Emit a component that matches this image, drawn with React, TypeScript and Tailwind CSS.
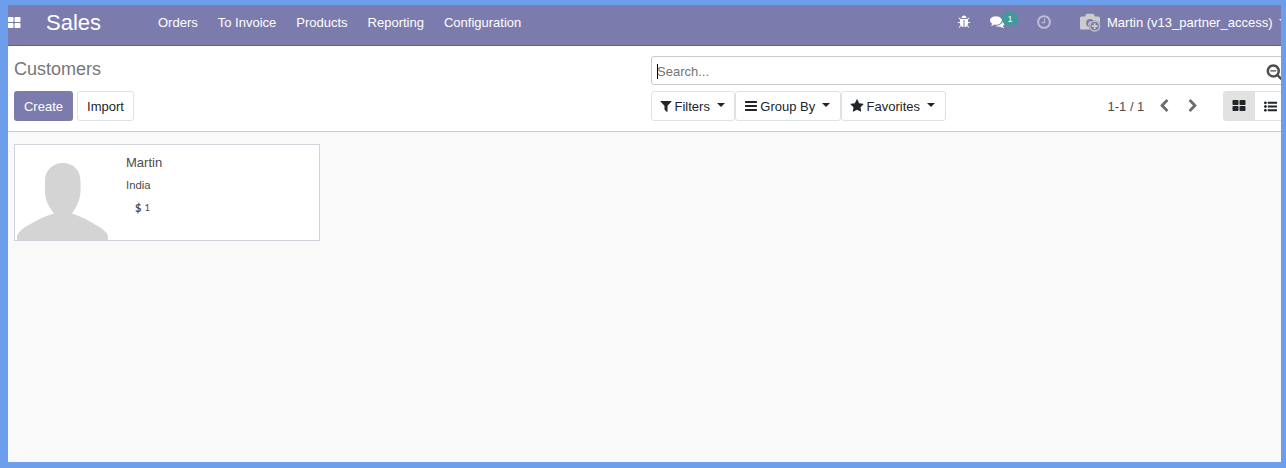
import React from "react";

const block = "h-512q-52 0-90-38t-38-90v-384q0-52 38-90t90-38h512q52 0 90 38t38 90z";
const bar = "v128q0 26-19 45t-45 19h-1408q-26 0-45-19t-19-45v-128q0-26 19-45t45-19h1408q26 0 45 19t19 45z";
const dot = "q0 80-56 136t-136 56-136-56-56-136 56-136 136-56 136 56 56 136z";
const line = "v192q0 13-9.5 22.5t-22.5 9.5h-1216q-13 0-22.5-9.5t-9.5-22.5v-192q0-13 9.5-22.5t22.5-9.5h1216q13 0 22.5 9.5t9.5 22.5z";

const icons = {
  grid: `M832 1024v384q0 52-38 90t-90 38${block}M832 256v384q0 52-38 90t-90 38${block}M1728 1024v384q0 52-38 90t-90 38${block}M1728 256v384q0 52-38 90t-90 38${block}`,
  bars: `M1664 1344${bar}M1664 832${bar}M1664 320${bar}`,
  list: `M384 1408${dot}M384 896${dot}M384 384${dot}M1792 1312${line}M1792 800${line}M1792 288${line}`,
  searchMinus:
    "M1088 800v64q0 13-9.5 22.5t-22.5 9.5h-576q-13 0-22.5-9.5t-9.5-22.5v-64q0-13 9.5-22.5t22.5-9.5h576q13 0 22.5 9.5t9.5 22.5zm128 32q0-185-131.5-316.5t-316.5-131.5-316.5 131.5-131.5 316.5 131.5 316.5 316.5 131.5 316.5-131.5 131.5-316.5zm512 832q0 53-37.5 90.5t-90.5 37.5q-54 0-90-38l-343-342q-179 124-399 124-143 0-273.5-55.5t-225-150-150-225-55.5-273.5 55.5-273.5 150-225 225-150 273.5-55.5 273.5 55.5 225 150 150 225 55.5 273.5q0 220-124 399l343 343q37 37 37 90z",
  filter:
    "M1595 295q17 41-14 70l-493 493v742q0 42-39 59-13 5-25 5-27 0-45-19l-256-256q-19-19-19-45v-486l-493-493q-31-29-14-70 17-39 59-39h1280q42 0 59 39z",
  star: "M1728 647q0 22-26 48l-363 354 86 500q1 7 1 20 0 21-10.5 35.5t-30.5 14.5q-19 0-40-12l-449-236-449 236q-22 12-40 12-21 0-31.5-14.5t-10.5-35.5q0-6 2-20l86-500-364-354q-25-27-25-48 0-37 56-46l502-73 225-455q19-41 49-41t49 41l225 455 502 73q56 9 56 46z",
  clock:
    "M1024 544v448q0 14-9 23t-23 9h-320q-14 0-23-9t-9-23v-64q0-14 9-23t23-9h224v-352q0-14 9-23t23-9h64q14 0 23 9t9 23zm416 352q0-148-73-273t-198-198-273-73-273 73-198 198-73 273 73 273 198 198 273 73 273-73 198-198 73-273zm224 0q0 209-103 385.5t-279.5 279.5-385.5 103-385.5-103-279.5-279.5-103-385.5 103-385.5 279.5-279.5 385.5-103 385.5 103 279.5 279.5 103 385.5z",
  comments:
    "M1408 768q0 139-94 257t-256.5 186.5-353.5 68.5q-86 0-176-16-124 88-278 128-36 9-86 16h-3q-11 0-20.5-8t-11.5-21q-1-3-1-6.5t.5-6.5 2-6l2.5-5 3.5-5.5 4-5 4.5-5 4-4.5q5-6 23-25t26-29.5 22.5-29 25-38.5 20.5-44q-124-72-195-177t-71-224q0-139 94-257t256.5-186.5 353.5-68.5 353.5 68.5 256.5 186.5 94 257zm384 256q0 120-71 224.5t-195 176.5q10 24 20.5 44t25 38.5 22.5 29 26 29.5 23 25q1 1 4 4.5t4.5 5 4 5 3.5 5.5l2.5 5 2 6 .5 6.5-1 6.5q-3 14-13 22t-22 7q-50-7-86-16-154-40-278-128-90 16-176 16-271 0-472-132 58 4 88 4 161 0 309-45t264-129q125-92 192-212t67-254q0-77-23-152 129 71 204 178t75 230z",
  bug: "M1696 960q0 26-19 45t-45 19h-224q0 171-67 290l208 209q19 19 19 45t-19 45q-18 19-45 19t-45-19l-198-197q-5 5-15 13t-42 28.5-65 36.5-82 29-97 13v-896h-128v896q-51 0-101.5-13.5t-87-33-66-39-43.5-32.5l-15-14-183 207q-20 21-48 21-24 0-43-16-19-18-20.5-44.5t15.5-46.5l202-227q-58-114-58-274h-224q-26 0-45-19t-19-45 19-45 45-19h224v-294l-173-173q-19-19-19-45t19-45 45-19 45 19l173 173h844l173-173q19-19 45-19t45 19 19 45-19 45l-173 173v294h224q26 0 45 19t19 45zm-480-576h-640q0-133 93.5-226.5t226.5-93.5 226.5 93.5 93.5 226.5z",
  left: "M1427 301l-531 531 531 531q19 19 19 45t-19 45l-166 166q-19 19-45 19t-45-19l-742-742q-19-19-19-45t19-45l742-742q19-19 45-19t45 19l166 166q19 19 19 45t-19 45z",
  right:
    "M1363 877l-742 742q-19 19-45 19t-45-19l-166-166q-19-19-19-45t19-45l531-531-531-531q-19-19-19-45t19-45l166-166q19-19 45-19t45 19l742 742q19 19 19 45t-19 45z",
};

function Icon({ name, className }: { name: keyof typeof icons; className: string }) {
  return (
    <svg viewBox="0 0 1792 1792" fill="currentColor" className={`block shrink-0 ${className}`}>
      <path d={icons[name]} />
    </svg>
  );
}

function Caret({ className = "" }: { className?: string }) {
  return (
    <svg viewBox="0 0 8 4" fill="currentColor" className={`block h-1 w-2 shrink-0 ${className}`}>
      <path d="M0 0h8L4 4z" />
    </svg>
  );
}

function CameraAvatar() {
  return (
    <svg viewBox="0 0 22 20" className="ml-[27px] block h-5 w-[22px] shrink-0">
      <path
        fill="#cccccc"
        d="M2.500 3.500h3.600l1-2.200Q7.500.7 8.500.7h5q1 0 1.400.6l1 2.200h3.300q1.800 0 1.800 1.800V16.500H2.500Q1 16.500 1 15V5Q1 3.500 2.500 3.500z"
      />
      <circle cx="11" cy="10" r="3.900" fill="#7c7bad" />
      <circle cx="12.200" cy="11.200" r="3" fill="#cccccc" />
      <circle cx="15.700" cy="13.200" r="5.800" fill="#7c7bad" />
      <circle cx="15.700" cy="13.200" r="4.900" fill="none" stroke="#cccccc" strokeWidth="1.100" />
      <path d="M15.700 10.200v6M12.700 13.200h6" stroke="#cccccc" strokeWidth="1.800" />
    </svg>
  );
}

function Navbar() {
  return (
    <header className="flex h-[41px] shrink-0 items-start border-b border-[#5f5e97] bg-[#7c7bad] text-white">
      <Icon name="grid" className="-ml-px mt-[11px] h-[14px] w-[14px]" />
      <div className="ml-[25px] w-[55px] text-[22px] leading-[35px]">Sales</div>
      <nav className="ml-[57px] flex gap-5 leading-[35px]">
        {["Orders", "To Invoice", "Products", "Reporting", "Configuration"].map((item) => (
          <a key={item}>{item}</a>
        ))}
      </nav>
      <div className="ml-auto flex h-[35px] w-[324px] shrink-0 items-center">
        <Icon name="bug" className="-mt-px h-[14px] w-[14px]" />
        <div className="relative ml-[19px]">
          <Icon name="comments" className="-mt-[2px] h-[15px] w-[15px]" />
          <span className="absolute -top-[4px] left-[12px] flex h-[14px] w-4 items-center justify-center rounded-full bg-[#3f9b9b] text-[9px] leading-none">
            1
          </span>
        </div>
        <Icon name="clock" className="-mt-[2px] ml-[31px] h-4 w-4 text-[#bdbcd8]" />
        <CameraAvatar />
        <span className="ml-[6px]">Martin (v13_partner_access)</span>
        <Caret className="-mt-[3px] ml-[7px]" />
      </div>
    </header>
  );
}

const dropdowns: { label: string; icon: keyof typeof icons; box: string; gap: string }[] = [
  { label: "Filters", icon: "filter", box: "w-[84px] pl-[7px]", gap: "ml-[1.5px]" },
  { label: "Group By", icon: "bars", box: "w-[106px] pl-2", gap: "ml-[2.3px]" },
  { label: "Favorites", icon: "star", box: "w-[105px] pl-2", gap: "ml-[2.6px]" },
];

function ControlPanel() {
  return (
    <section className="flex h-[86px] shrink-0 border-b border-[#c8c9cb] bg-white pl-[6px]">
      <div className="w-[637px] shrink-0 pt-[10px]">
        <h1 className="h-[35px] text-[18px] leading-[26px] text-[#777777]">Customers</h1>
        <div className="flex gap-1">
          <button className="h-[30px] w-[59px] rounded-[3px] bg-[#7c7bad] pt-[2px] text-white">Create</button>
          <button className="h-[30px] w-[57px] rounded-[3px] border border-[#dee2e6] pt-[2px] text-[#212529]">
            Import
          </button>
        </div>
      </div>
      <div className="w-[645px] shrink-0 pt-[10px]">
        <div className="flex h-[29px] items-center rounded-[3px] border border-[#c8c9cb] pl-[5px]">
          <span className="mt-[2px] h-[15px] w-px bg-black" />
          <span className="-ml-px flex-1 pt-[3px] text-[#757575]">Search...</span>
          <Icon name="searchMinus" className="mr-[12.5px] mt-px h-[17px] w-[17px] text-[#4c4c4c]" />
        </div>
        <div className="mt-[6px] flex h-[30px]">
          {dropdowns.map((d) => (
            <button
              key={d.label}
              className={`flex items-center rounded-[3px] border border-[#dee2e6] text-[#212529] ${d.box}`}
            >
              <Icon name={d.icon} className="h-[14px] w-[14px]" />
              <span className={`pt-[2px] ${d.gap}`}>{d.label}</span>
              <Caret className="-mt-[3px] ml-[7px]" />
            </button>
          ))}
          <div className="ml-[161px] flex w-[116px] items-center text-[#4c4c4c]">
            <span className="w-[50px] pt-[2px] pl-[0.5px]">1-1 / 1</span>
            <Icon name="left" className="h-[14px] w-[14px] text-[#6c6c6c]" />
            <Icon name="right" className="ml-[14.500px] h-[14px] w-[14px] text-[#6c6c6c]" />
          </div>
          <div className="flex text-[#212529]">
            <button className="flex w-8 items-center justify-center rounded-l-[3px] border border-[#dee2e6] bg-[#e2e2e2]">
              <Icon name="grid" className="h-[14px] w-[14px]" />
            </button>
            <button className="flex w-8 items-center border-y border-[#dee2e6] pl-[9px]">
              <Icon name="list" className="h-[13px] w-[13px]" />
            </button>
          </div>
        </div>
      </div>
    </section>
  );
}

function CustomerCard() {
  return (
    <article className="flex h-[97px] w-[306px] border border-[#ced4da] bg-white text-[#4c4c4c]">
      <svg viewBox="0 0 91 95" className="ml-[2px] block h-[95px] w-[91px]" fill="#d4d4d4">
        <path d="M46 18C56 18 63.500 25 63.500 36V46C63.500 54 60 61 55 68.500C59 70 65 72 72 76L84 83Q91 88 91 92V95H0V92Q0 88 8 82L19 76C26 72 32 70 37 68.500C31 61 28 54 28 46V36C28 25 36 18 46 18Z" />
      </svg>
      <div className="ml-[18px] pt-[10px]">
        <div className="h-[23px] leading-[15px]">Martin</div>
        <div className="h-[22px] text-[11.3px] leading-[15px]">India</div>
        <div className="flex items-center gap-[3px] pl-[9px] font-['Lato',sans-serif] leading-[14px]">
          <span className="text-[11px] font-bold">$</span>
          <span className="pt-px text-[9.5px]">1</span>
        </div>
      </div>
    </article>
  );
}

export default function App() {
  return (
    <div className="h-[468px] w-[1286px] overflow-hidden bg-[#6d9eeb] pb-[6px] pl-2 pr-[5px] pt-[5px] font-['Liberation_Sans',Arial,sans-serif] text-[13px] whitespace-nowrap">
      <div className="flex h-full flex-col overflow-hidden bg-[#f9f9f9]">
        <Navbar />
        <ControlPanel />
        <main className="flex-1 pl-[6px] pt-3">
          <CustomerCard />
        </main>
      </div>
    </div>
  );
}
